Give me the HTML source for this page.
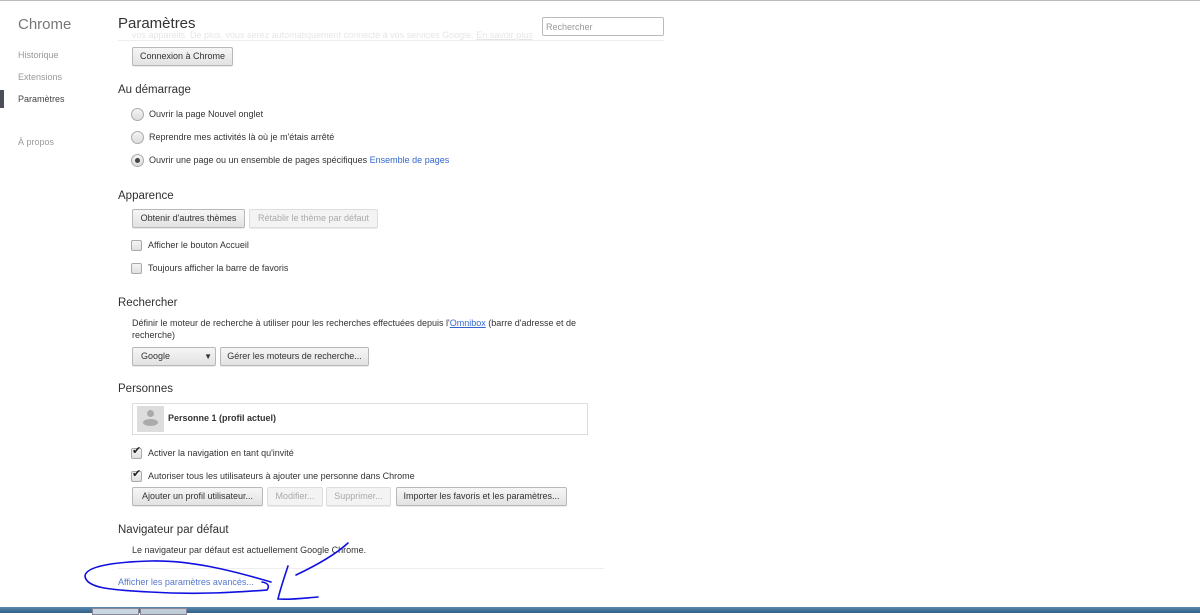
<!DOCTYPE html>
<html><head><meta charset="utf-8"><style>
body{margin:0;width:1200px;height:613px;overflow:hidden;background:#fff;font-family:"Liberation Sans",sans-serif;color:#303030;position:relative}
.a{position:absolute;white-space:nowrap}
.s{font-size:9px;color:#333}
.h{font-size:11.5px;color:#303030}
.nav{font-size:9px;color:#999}
.btn{position:absolute;white-space:nowrap;overflow:hidden;height:19px;box-sizing:border-box;border:1px solid #b8b8b8;border-radius:2px;background:linear-gradient(#f6f6f6,#e2e2e2);font-size:9px;color:#333;line-height:17px;text-align:center;box-shadow:0 1px 0 rgba(0,0,0,.08)}
.dis{color:#aaa;border-color:#ddd;background:#f3f3f3}
.r{position:absolute;width:11px;height:11px;border:1px solid #aaa;border-radius:50%;background:linear-gradient(#f4f4f4,#ddd)}
.c{position:absolute;width:9px;height:9px;border:1px solid #aaa;border-radius:2px;background:linear-gradient(#f4f4f4,#e0e0e0)}
.ln{color:#3366cc}
</style></head><body>
<div class="a" style="left:132px;top:30px;font-size:9px;color:#e6e6e6">vos appareils. De plus, vous serez automatiquement connecté à vos services Google. <u>En savoir plus</u></div>
<div class="a" style="left:118px;top:0;width:546px;height:31px;background:rgba(255,255,255,.9)"></div>
<div class="a" style="left:0;top:0;width:1200px;height:1px;background:#bbb"></div>
<div class="a" style="left:18px;top:16px;font-size:15px;color:#777">Chrome</div>
<div class="a nav" style="left:18px;top:50px">Historique</div>
<div class="a nav" style="left:18px;top:72px">Extensions</div>
<div class="a" style="left:0;top:90px;width:4px;height:18px;background:#4a4f58"></div>
<div class="a" style="left:18px;top:94px;font-size:9px;color:#444">Paramètres</div>
<div class="a nav" style="left:18px;top:137px">À propos</div>

<div class="a" style="left:118px;top:15px;font-size:15px;color:#333">Paramètres</div>
<div class="a" style="left:542px;top:17px;border:1px solid #bbb;border-radius:2px;font-size:9px;color:#999;line-height:18px;padding-left:3px;box-sizing:border-box;width:122px;height:19px">Rechercher</div>
<div class="a" style="left:118px;top:40px;width:546px;height:1px;background:#eee"></div>

<div class="btn" style="left:132px;top:47px;width:101px">Connexion à Chrome</div>

<div class="a h" style="left:118px;top:84px">Au démarrage</div>
<div class="r" style="left:131px;top:108px"></div><div class="a s" style="left:149px;top:109px">Ouvrir la page Nouvel onglet</div>
<div class="r" style="left:131px;top:131px"></div><div class="a s" style="left:149px;top:132px">Reprendre mes activités là où je m'étais arrêté</div>
<div class="r" style="left:131px;top:154px"></div><div class="a" style="left:135px;top:158px;width:5px;height:5px;border-radius:50%;background:#444"></div>
<div class="a s" style="left:149px;top:155px">Ouvrir une page ou un ensemble de pages spécifiques <span class="ln">Ensemble de pages</span></div>

<div class="a h" style="left:118px;top:190px">Apparence</div>
<div class="btn" style="left:132px;top:209px;width:113px">Obtenir d'autres thèmes</div>
<div class="btn dis" style="left:249px;top:209px;width:129px">Rétablir le thème par défaut</div>
<div class="c" style="left:131px;top:240px"></div><div class="a s" style="left:148px;top:240px">Afficher le bouton Accueil</div>
<div class="c" style="left:131px;top:263px"></div><div class="a s" style="left:148px;top:263px">Toujours afficher la barre de favoris</div>

<div class="a h" style="left:118px;top:297px">Rechercher</div>
<div class="a s" style="left:132px;top:318px">Définir le moteur de recherche à utiliser pour les recherches effectuées depuis l'<u class="ln">Omnibox</u> (barre d'adresse et de</div>
<div class="a s" style="left:132px;top:330px">recherche)</div>
<div class="btn" style="left:132px;top:347px;width:84px;text-align:left;padding-left:8px">Google<span style="position:absolute;right:3px;top:0;font-size:8px">▼</span></div>
<div class="btn" style="left:220px;top:347px;width:149px">Gérer les moteurs de recherche...</div>

<div class="a h" style="left:118px;top:383px">Personnes</div>
<div class="a" style="left:132px;top:403px;border:1px solid #ddd;box-sizing:border-box;width:456px;height:32px"></div>
<div class="a" style="left:137px;top:406px;width:27px;height:26px;background:#ddd;overflow:hidden">
<div class="a" style="left:10px;top:4px;width:7px;height:7px;border-radius:50%;background:#aaa"></div>
<div class="a" style="left:6px;top:13px;width:15px;height:7px;border-radius:50%;background:#aaa"></div></div>
<div class="a" style="left:168px;top:413px;font-size:9px;font-weight:bold;color:#333">Personne 1 (profil actuel)</div>
<div class="c" style="left:131px;top:448px"></div><div class="a" style="left:132px;top:444px;font-size:11px;color:#222">✔</div>
<div class="a s" style="left:148px;top:448px">Activer la navigation en tant qu'invité</div>
<div class="c" style="left:131px;top:471px"></div><div class="a" style="left:132px;top:467px;font-size:11px;color:#222">✔</div>
<div class="a s" style="left:148px;top:471px">Autoriser tous les utilisateurs à ajouter une personne dans Chrome</div>
<div class="btn" style="left:132px;top:487px;width:131px">Ajouter un profil utilisateur...</div>
<div class="btn dis" style="left:267px;top:487px;width:56px">Modifier...</div>
<div class="btn dis" style="left:326px;top:487px;width:65px">Supprimer...</div>
<div class="btn" style="left:396px;top:487px;width:171px">Importer les favoris et les paramètres...</div>

<div class="a h" style="left:118px;top:524px">Navigateur par défaut</div>
<div class="a s" style="left:132px;top:545px">Le navigateur par défaut est actuellement Google Chrome.</div>
<div class="a" style="left:118px;top:568px;width:486px;height:1px;background:#eee"></div>
<div class="a" style="left:118px;top:577px;font-size:9px;color:#5577cc">Afficher les paramètres avancés...</div>

<svg class="a" style="left:0;top:0" width="1200" height="613"><g fill="none" stroke="#1010e0" stroke-width="1.6" stroke-linecap="round">
<path d="M271,582 C230,570 190,560 150,561 C115,562 86,566 85,576 C86,588 110,590 150,592 C200,595 240,592 267,590 C270,586 268,583 262,582"/>
<path d="M288,566 C284,578 280,590 278,599 C290,600 305,598 318,597"/>
<path d="M296,575 C315,566 335,555 348,543"/>
</g></svg>

<div class="a" style="left:0;top:607px;width:1200px;height:6px;background:linear-gradient(#5a8ab0,#2f5f85)"></div>
<div class="a" style="left:92px;top:608px;width:45px;height:5px;background:#c9d6e2;border:1px solid #889"></div>
<div class="a" style="left:140px;top:608px;width:45px;height:5px;background:#c0ccd8;border:1px solid #889"></div>
</body></html>
